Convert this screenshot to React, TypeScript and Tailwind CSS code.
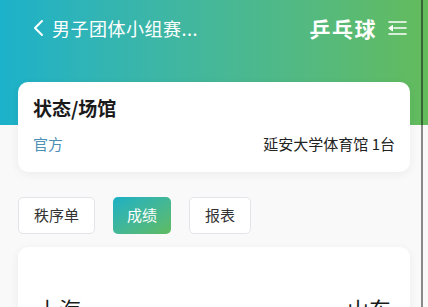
import React from 'react';

function MenuIcon() {
  return (
    <svg width="20" height="16" viewBox="0 0 20 16" fill="none" stroke="white" strokeWidth="1.6" strokeLinecap="round">
      <path d="M2 2h17" />
      <path d="M7 8h12" />
      <path d="M2 14h17" />
      <path d="M2 8l3.5-2.5v5z" fill="white" strokeWidth="1" />
    </svg>
  );
}

const tabs = ['秩序单', '成绩', '报表'];

export default function App() {
  return (
    <div className="relative h-[307px] w-[428px] overflow-hidden bg-[#f9f9f9] font-['Noto_Sans_CJK_SC',sans-serif]">
      {/* Header */}
      <div className="h-[125px] bg-gradient-to-r from-[#1bb1ca] to-[#63bb5b]">
        <div className="flex h-[56px] items-center justify-between pl-[32px] pr-[21px] text-white">
          <div className="flex items-center gap-[6px]">
            <svg width="14" height="20" viewBox="0 0 14 20" fill="none" stroke="white" strokeWidth="2" strokeLinecap="round" strokeLinejoin="round">
              <path d="M10 3l-7 7 7 7" />
            </svg>
            <span className="text-[18px] leading-none tracking-[0.5px]">男子团体小组赛...</span>
          </div>
          <div className="flex items-center gap-[10px]">
            <span className="text-[21px] font-bold leading-none tracking-[1.5px]">乒乓球</span>
            <MenuIcon />
          </div>
        </div>
      </div>

      {/* Status card */}
      <div className="-mt-[43px] px-[18px]">
        <div className="rounded-[10px] bg-white px-[15px] pb-[17px] pt-[14px] shadow-[0_2px_10px_rgba(0,0,0,0.06)]">
          <div className="text-[19px] font-bold leading-[24px] text-[#1a1a1a]">状态/场馆</div>
          <div className="mt-[13px] flex items-center justify-between text-[15px] leading-[22px]">
            <span className="text-[#4e8fb6]">官方</span>
            <span className="text-[#222]">延安大学体育馆 1台</span>
          </div>
        </div>
      </div>

      {/* Tabs */}
      <div className="mt-[25px] flex gap-[18px] px-[18px]">
        {tabs.map((t) =>
          t === '成绩' ? (
            <div
              key={t}
              className="flex h-[37px] items-center rounded-[5px] bg-gradient-to-br from-[#18b0c5] to-[#5fbb5e] px-[14px] text-[15px] text-white"
            >
              {t}
            </div>
          ) : (
            <div
              key={t}
              className="flex h-[37px] items-center rounded-[5px] border border-[#e1e5ea] bg-white px-[15px] text-[15px] text-[#333]"
            >
              {t}
            </div>
          )
        )}
      </div>

      {/* Score card */}
      <div className="mt-[13px] px-[18px]">
        <div className="h-[120px] rounded-[10px] bg-white px-[19px] pt-[47px] shadow-[0_2px_10px_rgba(0,0,0,0.06)]">
          <div className="flex items-start justify-between text-[22px] leading-[28px] text-[#1a1a1a]">
            <span>上海</span>
            <div className="flex gap-[40px] text-[18px] text-[#ccc]">
              <span>·</span>
              <span>·</span>
            </div>
            <span>山东</span>
          </div>
        </div>
      </div>

      {/* scrollbar edge */}
      <div className="absolute left-[421px] top-0 h-full w-[2px] bg-black/45" />
    </div>
  );
}
